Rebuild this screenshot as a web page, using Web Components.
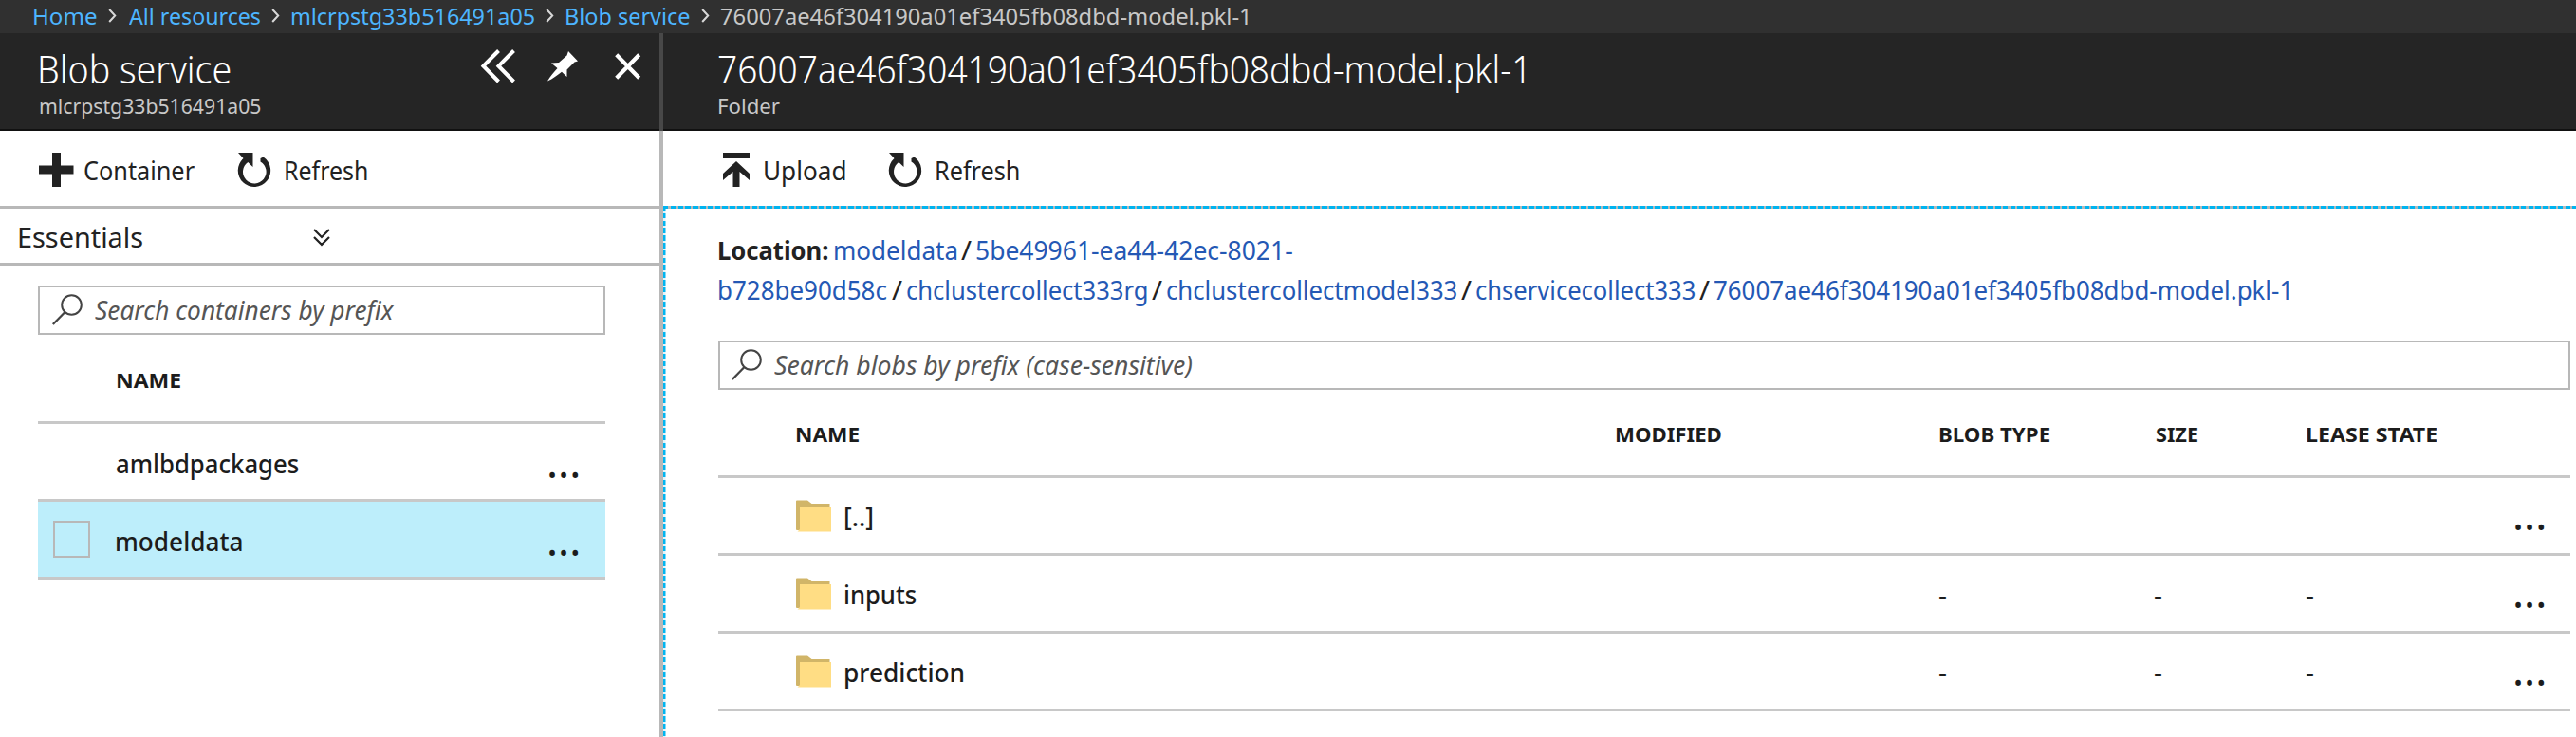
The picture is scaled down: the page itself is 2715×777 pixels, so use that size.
<!DOCTYPE html>
<html lang="en">
<head>
<meta charset="utf-8">
<title>Blob service</title>
<style>
html,body{margin:0;height:100%;overflow:hidden;background:#fff}
</style>
</head>
<body>
<portal-shell></portal-shell>
<script>
const FONT = '"Noto Sans","Open Sans",sans-serif';
const define = (name, html, setup) => {
  const t = document.createElement('template');
  t.innerHTML = html;
  customElements.define(name, class extends HTMLElement {
    constructor() {
      super();
      this.attachShadow({mode: 'open'}).append(t.content.cloneNode(true));
    }
    connectedCallback() { if (setup) setup(this, this.shadowRoot); }
  });
};

/* A one-line label whose box is exactly as wide as its ink. */
const ctx = document.createElement('canvas').getContext('2d');
define('fit-label', `<style>
:host{display:block;flex:none;white-space:pre}
span{display:block;width:max-content;transform-origin:0 50%}
</style><span><slot></slot></span>`, (el, root) => {
  const s = +el.getAttribute('s'), w = +el.getAttribute('w');
  const weight = el.getAttribute('b') || 400;
  const style = el.hasAttribute('i') ? 'italic' : 'normal';
  ctx.font = `${style} ${weight} ${s}px ${FONT}`;
  const m = ctx.measureText(el.textContent);
  const k = w / (m.actualBoundingBoxLeft + m.actualBoundingBoxRight);
  el.style.cssText += `;font:${ctx.font};line-height:${el.getAttribute('h') || 40}px;width:${w}px`;
  const span = root.querySelector('span');
  span.style.marginLeft = m.actualBoundingBoxLeft * k + 'px';
  span.style.transform = `scaleX(${k})`;
});

const ICONS = {
  crumb: [9, 15, '<path d="M1.2 1l6 6.5-6 6.5" fill="none" stroke="#d8d8d8" stroke-width="2"/>'],
  collapse: [36, 36, '<path d="M18.500 1.500L2.500 17.700 18.500 34M34.500 1.500L18.500 17.700 34.500 34" fill="none" stroke="#fff" stroke-width="4"/>'],
  pin: [32, 32, '<path d="M22 0L32 10.500 28.500 11.500 20.500 19.500V27L15 21.800C10 25.500 6 29 0 31.500 3 26 7 22 10.500 18L4 12.500 12 12 20.500 4.500z" fill="#fff"/>'],
  close: [28, 28, '<path d="M1.700 1.700l24 24.600M25.700 1.700l-24 24.600" fill="none" stroke="#fff" stroke-width="4.200"/>'],
  plus: [36, 36, '<path d="M14 0h9v13.500h13.500v9H23V36h-9V22.500H0v-9h14z" fill="#222"/>'],
  refresh: [36, 36, '<path d="M1 0H16.500V15L11.300 10A12.300 12.300 0 1 0 24.500 9.500L24.500 6 27.500 4.500A17.200 17.200 0 1 1 6.500 6z" fill="#222"/>'],
  upload: [28, 36, '<path d="M0 0h28v6H0zM14 9L28 22v7L17.500 20V36H10.500V20L0 29v-7z" fill="#222"/>'],
  down: [18, 19, '<path d="M1 1l8 8 8-8M1 9l8 8 8-8" fill="none" stroke="#222" stroke-width="2.200"/>'],
  search: [32, 33, '<circle cx="20.500" cy="11.500" r="10.300" fill="none" stroke="#444" stroke-width="2"/><path d="M13.500 19L.8 32" fill="none" stroke="#444" stroke-width="2.300"/>'],
  folder: [37, 34, '<path d="M0 1.500Q0 .5 1 .5H12L16.500 4H35.500V32H1Q0 32 0 31z" fill="#d1b568"/><path d="M4 7H37V33.500H1.500L4 31z" fill="#ffdd84"/>']
};
define('ui-icon', `<style>:host{display:block;flex:none}svg{display:block;overflow:visible}</style>`, (el, root) => {
  const [w, h, body] = ICONS[el.getAttribute('n')];
  root.innerHTML += `<svg width="${w}" height="${h}" viewBox="0 0 ${w} ${h}">${body}</svg>`;
});

define('crumb-bar', `<style>
:host{display:flex;height:35px;box-sizing:border-box;padding:0 0 2px 36px;align-items:center;background:#303030;color:#4db5ff}
ui-icon{margin:0 12.500px 0 12px}
.here{color:#c8c8c8}
</style>
<fit-label s="24" w="66" h="33">Home</fit-label><ui-icon n="crumb"></ui-icon>
<fit-label s="24" w="138.500" h="33">All resources</fit-label><ui-icon n="crumb"></ui-icon>
<fit-label s="24" w="255.500" h="33">mlcrpstg33b516491a05</fit-label><ui-icon n="crumb"></ui-icon>
<fit-label s="24" w="130" h="33">Blob service</fit-label><ui-icon n="crumb"></ui-icon>
<fit-label class="here" s="24" w="555" h="33">76007ae46f304190a01ef3405fb08dbd-model.pkl-1</fit-label>`);

define('blade-header', `<style>
:host{display:flex;justify-content:space-between;height:103px;box-sizing:border-box;background:#252525;border-bottom:2px solid #111;color:#fff}
.t{padding-top:12px}
.a{display:flex;align-items:center;height:36px;padding-top:17px}
::slotted(.sub){color:#c8c8c8}
</style><div class="t"><slot></slot></div><div class="a"><slot name="actions"></slot></div>`);

define('tool-bar', `<style>
:host{display:flex;height:79px;align-items:center;color:#222}
::slotted(fit-label){margin-top:4px}
::slotted(ui-icon){margin-top:2px}
</style><slot></slot>`);

define('search-box', `<style>
:host{display:flex;height:52px;box-sizing:border-box;border:2.5px solid #b8b8b8;padding-left:12.500px;align-items:center;color:#555}
::slotted(fit-label){margin-left:13px}
ui-icon{margin-top:-1px}
</style><ui-icon n="search"></ui-icon><slot></slot>`);

define('grid-row', `<style>
:host{display:grid;grid-template-columns:var(--cols);height:82px;box-sizing:border-box;border-bottom:3px solid #c8c8c8;align-items:center;color:#1c1c1c}
:host([selected]){background:#bdeefb}
</style><slot></slot>`);

define('container-blade', `<style>
:host{display:block;width:695px;flex:none}
blade-header{padding:0 19px 0 43px}
tool-bar{padding-left:41px;border-bottom:3px solid #b8b8b8}
.ess{display:flex;height:57px;align-items:center;padding-left:20px;border-bottom:3px solid #b8b8b8;color:#222}
.body{padding:21px 57px 0 40px;--cols:83px 456px 1fr}
grid-row.h{height:94px}
.box{width:39px;height:39px;box-sizing:border-box;border:2px solid #b8b8b8;margin-left:16px}
.dots{margin-top:-2px}
</style>
<blade-header>
 <fit-label s="41" w="200" h="50" b="300">Blob service</fit-label>
 <fit-label class="sub" s="21.800" w="233" h="30" style="margin-left:-1px">mlcrpstg33b516491a05</fit-label>
 <ui-icon slot="actions" n="collapse" style="margin-right:34px"></ui-icon>
 <ui-icon slot="actions" n="pin" style="margin-right:39px"></ui-icon>
 <ui-icon slot="actions" n="close"></ui-icon>
</blade-header>
<tool-bar>
 <ui-icon n="plus"></ui-icon><fit-label s="27" w="116" style="margin-left:12px">Container</fit-label>
 <ui-icon n="refresh" style="margin-left:45px"></ui-icon><fit-label s="27" w="86" style="margin-left:15px">Refresh</fit-label>
</tool-bar>
<div class="ess"><fit-label s="29.500" w="130" style="margin-top:2px">Essentials</fit-label><ui-icon n="down" style="margin:3px 0 0 180px"></ui-icon></div>
<div class="body">
 <search-box><fit-label s="27.500" w="316" i>Search containers by prefix</fit-label></search-box>
 <grid-row class="h"><i></i><fit-label s="21.500" w="67" b="700" style="margin-top:4px">NAME</fit-label></grid-row>
 <grid-row><i></i><fit-label s="27.500" w="192" b="500" style="margin-top:5px">amlbdpackages</fit-label><fit-label class="dots" s="46" w="31" b="400">...</fit-label></grid-row>
 <grid-row selected><div class="box"></div><fit-label s="27.500" w="132" b="500" style="margin-top:5px">modeldata</fit-label><fit-label class="dots" s="46" w="31" b="400">...</fit-label></grid-row>
</div>`);

define('path-line', `<style>
:host{display:flex;height:42px;color:#222}
</style><slot></slot>`);

define('folder-blade', `<style>
:host{display:block;flex:1;min-width:0}
blade-header{padding-left:59px}
tool-bar{padding-left:63px}
.frame{height:560px;box-sizing:border-box;padding:31px 6px 0 57.500px;
 background:repeating-linear-gradient(90deg,#00b4f0 0 5.500px,#b8b8b8 5.500px 7.800px) 0 0/100% 3px no-repeat,
 repeating-linear-gradient(#00b4f0 0 5.500px,#e4f4fa 5.500px 7.800px) 0 0/2.500px 100% no-repeat}
.loc{padding-left:1px;height:111px}
.loc .p{color:#2458b4}
.sl{margin:0 5px}
.tbl{--cols:82.500px 51.500px 812.500px 341.500px 227px 160px 219px 1fr}
grid-row.h{height:93px}
.up{margin-top:1px}
</style>
<blade-header>
 <fit-label s="41" w="848" h="50" b="300">76007ae46f304190a01ef3405fb08dbd-model.pkl-1</fit-label>
 <fit-label class="sub" s="21.800" w="64" h="30">Folder</fit-label>
</blade-header>
<tool-bar>
 <ui-icon n="upload"></ui-icon><fit-label s="27" w="85" style="margin-left:15.500px">Upload</fit-label>
 <ui-icon n="refresh" style="margin-left:45.500px"></ui-icon><fit-label s="27" w="87" style="margin-left:14.500px">Refresh</fit-label>
</tool-bar>
<div class="frame">
 <div class="loc">
 <path-line><fit-label s="27" w="115" h="32" b="700">Location:</fit-label><fit-label class="p" s="27" w="128" style="margin-left:7px" h="32">modeldata</fit-label><fit-label class="sl" s="27" w="11" h="32">/</fit-label><fit-label class="p" s="27" w="333" h="32">5be49961-ea44-42ec-8021-</fit-label></path-line>
 <path-line><fit-label class="p" s="27" w="177" h="32">b728be90d58c</fit-label><fit-label class="sl" s="27" w="11" h="32">/</fit-label><fit-label class="p" s="27" w="253" h="32">chclustercollect333rg</fit-label><fit-label class="sl" s="27" w="11" h="32">/</fit-label><fit-label class="p" s="27" w="305" h="32">chclustercollectmodel333</fit-label><fit-label class="sl" s="27" w="11" h="32">/</fit-label><fit-label class="p" s="27" w="230" h="32">chservicecollect333</fit-label><fit-label class="sl" s="27" w="11" h="32">/</fit-label><fit-label class="p" s="27" w="605" h="32">76007ae46f304190a01ef3405fb08dbd-model.pkl-1</fit-label></path-line>
 </div>
 <search-box><fit-label s="27.500" w="440" i>Search blobs by prefix (case-sensitive)</fit-label></search-box>
 <div class="tbl"></div>
</div>`, (el, root) => {
  const head = (t, w) => `<fit-label s="21.500" w="${w}" b="700" style="margin-top:3px">${t}</fit-label>`;
  const dash = v => v ? `<fit-label s="26" w="7.500" style="margin-top:3px">-</fit-label>` : '<i></i>';
  const row = (t, w, v) => `<grid-row><i></i><ui-icon n="folder" class="up"></ui-icon><fit-label s="27.500" w="${w}" b="500" style="margin-top:3px">${t}</fit-label><i></i>${dash(v)}${dash(v)}${dash(v)}<fit-label s="46" w="31" b="400" style="margin-top:-5px">...</fit-label></grid-row>`;
  root.querySelector('.tbl').innerHTML =
    `<grid-row class="h"><i></i>${head('NAME', 66)}<i></i>${head('MODIFIED', 111)}${head('BLOB TYPE', 116)}${head('SIZE', 44)}${head('LEASE STATE', 137)}<i></i></grid-row>`
    + row('[..]', 28, 0) + row('inputs', 75, 1) + row('prediction', 125, 1);
});

define('portal-shell', `<style>
:host{display:flex;flex-direction:column;width:2715px;height:777px;overflow:hidden;background:#fff}
.blades{display:flex;flex:1;min-height:0}
.rule{width:4px;flex:none;background:linear-gradient(#484848 0 103px,#b8b8b8 103px)}
</style>
<crumb-bar></crumb-bar>
<div class="blades"><container-blade></container-blade><div class="rule"></div><folder-blade></folder-blade></div>`);
</script>
</body>
</html>
